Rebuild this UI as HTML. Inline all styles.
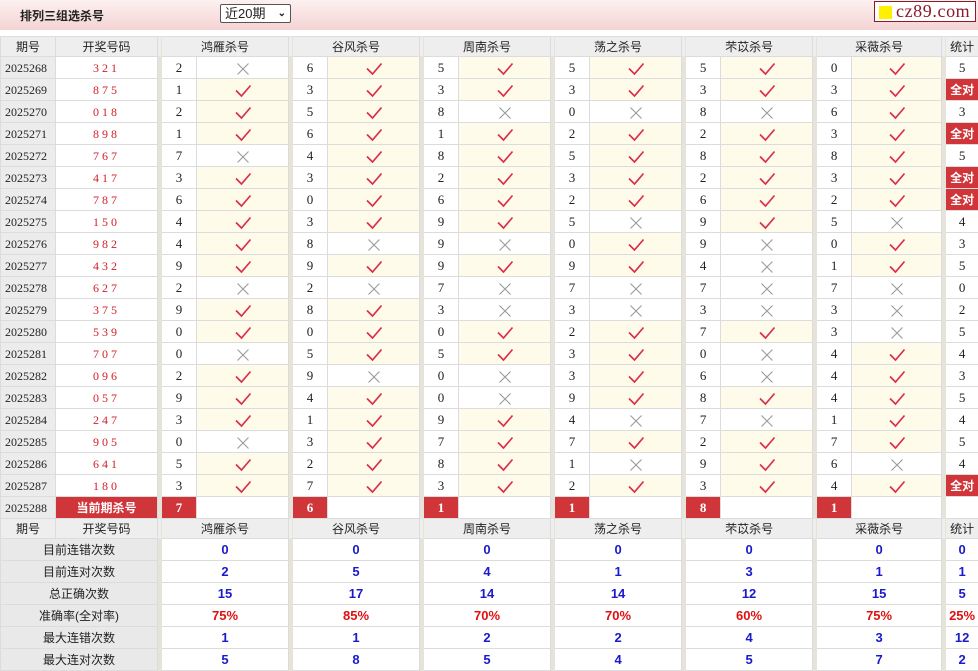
<!DOCTYPE html>
<html><head><meta charset="utf-8"><style>
*{margin:0;padding:0;box-sizing:border-box}
body{width:978px;height:669px;overflow:hidden;background:#fff;font-family:"Liberation Sans","Noto Sans CJK SC",sans-serif;font-size:12px;color:#222;position:relative}
.top{position:absolute;left:0;top:0;width:978px;height:30px;background:linear-gradient(#fdf1f1,#f4d3d3)}
.title{position:absolute;left:20px;top:7px;font-weight:bold;font-size:12px;color:#222}
.sel{position:absolute;left:220px;top:4px;width:71px;height:19px;border:1px solid #555;border-radius:2px;background:#fff;font-size:13px;padding-left:4px;line-height:17px}
.sel span{position:absolute;right:4px;top:0;font-size:10px;font-weight:bold}
.logo{position:absolute;left:874px;top:1px;width:102px;height:21px;border:1px solid #8b1a2a;background:#fff;font-family:"Liberation Serif",serif;font-size:18px;color:#8b1a2a;line-height:19px;padding-left:21px;letter-spacing:0.6px}
.logo i{position:absolute;left:4px;top:4px;width:13px;height:13px;background:#ffef00}
table{position:absolute;left:0;top:36px;width:978px;border-collapse:collapse;table-layout:fixed}
td{border:1px solid #dcdcdc;height:22px;text-align:center;padding:0;font-family:"Liberation Serif","Noto Sans CJK SC",serif;font-size:13px;line-height:20px;overflow:hidden;white-space:nowrap}
tr.h td{background:#eeeeee;font-family:"Liberation Sans","Noto Sans CJK SC",sans-serif;font-size:12px;height:20px;line-height:18px}
td.q{background:#ececec;text-align:left;padding-left:4px;font-size:12px}
td.k{color:#d2202a;letter-spacing:3px;font-size:12px}
td.s{background:#e6e3da;border-color:#e6e3da}
td.y{background:#fffbeb}
td.r{background:#d0353a;color:#fff;font-weight:bold}
td.a{background:#d0353a;color:#fff;font-weight:bold;font-family:"Liberation Sans","Noto Sans CJK SC",sans-serif;font-size:12px}
td.l{background:#e9e9e9;font-family:"Liberation Sans","Noto Sans CJK SC",sans-serif;font-size:12px}
td.b{color:#1a1acc;font-weight:bold;font-family:"Liberation Sans",sans-serif;font-size:13px}
td.p{color:#e01010;font-weight:bold;font-family:"Liberation Sans",sans-serif;font-size:13px}
svg{vertical-align:middle}
</style></head><body>
<svg width="0" height="0" style="position:absolute"><defs>
<symbol id="v" viewBox="0 0 18 14"><path d="M2 6.5 L7.5 12 L16.5 1.5" fill="none" stroke="#d9304a" stroke-width="1.7"/></symbol>
<symbol id="x" viewBox="0 0 14 14"><path d="M1.5 1.5 L12.5 12.5 M12.5 1.5 L1.5 12.5" fill="none" stroke="#9a9a9a" stroke-width="1.1"/></symbol>
</defs></svg>
<div class="top"><div class="title">排列三组选杀号</div><div class="sel">近20期<span>&#8964;</span></div><div class="logo"><i></i>cz89.com</div></div>
<table>
<colgroup><col style="width:55px"><col style="width:102px"><col style="width:4px">
<col style="width:35px"><col style="width:92px"><col style="width:4px">
<col style="width:35px"><col style="width:92px"><col style="width:4px">
<col style="width:35px"><col style="width:92px"><col style="width:4px">
<col style="width:35px"><col style="width:92px"><col style="width:4px">
<col style="width:35px"><col style="width:92px"><col style="width:4px">
<col style="width:35px"><col style="width:90px"><col style="width:4px">
<col style="width:33px"></colgroup>
<tr class="h"><td>期号</td><td>开奖号码</td><td class="s"></td><td colspan="2">鸿雁杀号</td><td class="s"></td><td colspan="2">谷风杀号</td><td class="s"></td><td colspan="2">周南杀号</td><td class="s"></td><td colspan="2">荡之杀号</td><td class="s"></td><td colspan="2">芣苡杀号</td><td class="s"></td><td colspan="2">采薇杀号</td><td class="s"></td><td>统计</td></tr>
<tr><td class="q">2025268</td><td class="k">321</td><td class="s"></td><td>2</td><td><svg width="14" height="14"><use href="#x"/></svg></td><td class="s"></td><td>6</td><td class="y"><svg width="18" height="14"><use href="#v"/></svg></td><td class="s"></td><td>5</td><td class="y"><svg width="18" height="14"><use href="#v"/></svg></td><td class="s"></td><td>5</td><td class="y"><svg width="18" height="14"><use href="#v"/></svg></td><td class="s"></td><td>5</td><td class="y"><svg width="18" height="14"><use href="#v"/></svg></td><td class="s"></td><td>0</td><td class="y"><svg width="18" height="14"><use href="#v"/></svg></td><td class="s"></td><td>5</td></tr>
<tr><td class="q">2025269</td><td class="k">875</td><td class="s"></td><td>1</td><td class="y"><svg width="18" height="14"><use href="#v"/></svg></td><td class="s"></td><td>3</td><td class="y"><svg width="18" height="14"><use href="#v"/></svg></td><td class="s"></td><td>3</td><td class="y"><svg width="18" height="14"><use href="#v"/></svg></td><td class="s"></td><td>3</td><td class="y"><svg width="18" height="14"><use href="#v"/></svg></td><td class="s"></td><td>3</td><td class="y"><svg width="18" height="14"><use href="#v"/></svg></td><td class="s"></td><td>3</td><td class="y"><svg width="18" height="14"><use href="#v"/></svg></td><td class="s"></td><td class="a">全对</td></tr>
<tr><td class="q">2025270</td><td class="k">018</td><td class="s"></td><td>2</td><td class="y"><svg width="18" height="14"><use href="#v"/></svg></td><td class="s"></td><td>5</td><td class="y"><svg width="18" height="14"><use href="#v"/></svg></td><td class="s"></td><td>8</td><td><svg width="14" height="14"><use href="#x"/></svg></td><td class="s"></td><td>0</td><td><svg width="14" height="14"><use href="#x"/></svg></td><td class="s"></td><td>8</td><td><svg width="14" height="14"><use href="#x"/></svg></td><td class="s"></td><td>6</td><td class="y"><svg width="18" height="14"><use href="#v"/></svg></td><td class="s"></td><td>3</td></tr>
<tr><td class="q">2025271</td><td class="k">898</td><td class="s"></td><td>1</td><td class="y"><svg width="18" height="14"><use href="#v"/></svg></td><td class="s"></td><td>6</td><td class="y"><svg width="18" height="14"><use href="#v"/></svg></td><td class="s"></td><td>1</td><td class="y"><svg width="18" height="14"><use href="#v"/></svg></td><td class="s"></td><td>2</td><td class="y"><svg width="18" height="14"><use href="#v"/></svg></td><td class="s"></td><td>2</td><td class="y"><svg width="18" height="14"><use href="#v"/></svg></td><td class="s"></td><td>3</td><td class="y"><svg width="18" height="14"><use href="#v"/></svg></td><td class="s"></td><td class="a">全对</td></tr>
<tr><td class="q">2025272</td><td class="k">767</td><td class="s"></td><td>7</td><td><svg width="14" height="14"><use href="#x"/></svg></td><td class="s"></td><td>4</td><td class="y"><svg width="18" height="14"><use href="#v"/></svg></td><td class="s"></td><td>8</td><td class="y"><svg width="18" height="14"><use href="#v"/></svg></td><td class="s"></td><td>5</td><td class="y"><svg width="18" height="14"><use href="#v"/></svg></td><td class="s"></td><td>8</td><td class="y"><svg width="18" height="14"><use href="#v"/></svg></td><td class="s"></td><td>8</td><td class="y"><svg width="18" height="14"><use href="#v"/></svg></td><td class="s"></td><td>5</td></tr>
<tr><td class="q">2025273</td><td class="k">417</td><td class="s"></td><td>3</td><td class="y"><svg width="18" height="14"><use href="#v"/></svg></td><td class="s"></td><td>3</td><td class="y"><svg width="18" height="14"><use href="#v"/></svg></td><td class="s"></td><td>2</td><td class="y"><svg width="18" height="14"><use href="#v"/></svg></td><td class="s"></td><td>3</td><td class="y"><svg width="18" height="14"><use href="#v"/></svg></td><td class="s"></td><td>2</td><td class="y"><svg width="18" height="14"><use href="#v"/></svg></td><td class="s"></td><td>3</td><td class="y"><svg width="18" height="14"><use href="#v"/></svg></td><td class="s"></td><td class="a">全对</td></tr>
<tr><td class="q">2025274</td><td class="k">787</td><td class="s"></td><td>6</td><td class="y"><svg width="18" height="14"><use href="#v"/></svg></td><td class="s"></td><td>0</td><td class="y"><svg width="18" height="14"><use href="#v"/></svg></td><td class="s"></td><td>6</td><td class="y"><svg width="18" height="14"><use href="#v"/></svg></td><td class="s"></td><td>2</td><td class="y"><svg width="18" height="14"><use href="#v"/></svg></td><td class="s"></td><td>6</td><td class="y"><svg width="18" height="14"><use href="#v"/></svg></td><td class="s"></td><td>2</td><td class="y"><svg width="18" height="14"><use href="#v"/></svg></td><td class="s"></td><td class="a">全对</td></tr>
<tr><td class="q">2025275</td><td class="k">150</td><td class="s"></td><td>4</td><td class="y"><svg width="18" height="14"><use href="#v"/></svg></td><td class="s"></td><td>3</td><td class="y"><svg width="18" height="14"><use href="#v"/></svg></td><td class="s"></td><td>9</td><td class="y"><svg width="18" height="14"><use href="#v"/></svg></td><td class="s"></td><td>5</td><td><svg width="14" height="14"><use href="#x"/></svg></td><td class="s"></td><td>9</td><td class="y"><svg width="18" height="14"><use href="#v"/></svg></td><td class="s"></td><td>5</td><td><svg width="14" height="14"><use href="#x"/></svg></td><td class="s"></td><td>4</td></tr>
<tr><td class="q">2025276</td><td class="k">982</td><td class="s"></td><td>4</td><td class="y"><svg width="18" height="14"><use href="#v"/></svg></td><td class="s"></td><td>8</td><td><svg width="14" height="14"><use href="#x"/></svg></td><td class="s"></td><td>9</td><td><svg width="14" height="14"><use href="#x"/></svg></td><td class="s"></td><td>0</td><td class="y"><svg width="18" height="14"><use href="#v"/></svg></td><td class="s"></td><td>9</td><td><svg width="14" height="14"><use href="#x"/></svg></td><td class="s"></td><td>0</td><td class="y"><svg width="18" height="14"><use href="#v"/></svg></td><td class="s"></td><td>3</td></tr>
<tr><td class="q">2025277</td><td class="k">432</td><td class="s"></td><td>9</td><td class="y"><svg width="18" height="14"><use href="#v"/></svg></td><td class="s"></td><td>9</td><td class="y"><svg width="18" height="14"><use href="#v"/></svg></td><td class="s"></td><td>9</td><td class="y"><svg width="18" height="14"><use href="#v"/></svg></td><td class="s"></td><td>9</td><td class="y"><svg width="18" height="14"><use href="#v"/></svg></td><td class="s"></td><td>4</td><td><svg width="14" height="14"><use href="#x"/></svg></td><td class="s"></td><td>1</td><td class="y"><svg width="18" height="14"><use href="#v"/></svg></td><td class="s"></td><td>5</td></tr>
<tr><td class="q">2025278</td><td class="k">627</td><td class="s"></td><td>2</td><td><svg width="14" height="14"><use href="#x"/></svg></td><td class="s"></td><td>2</td><td><svg width="14" height="14"><use href="#x"/></svg></td><td class="s"></td><td>7</td><td><svg width="14" height="14"><use href="#x"/></svg></td><td class="s"></td><td>7</td><td><svg width="14" height="14"><use href="#x"/></svg></td><td class="s"></td><td>7</td><td><svg width="14" height="14"><use href="#x"/></svg></td><td class="s"></td><td>7</td><td><svg width="14" height="14"><use href="#x"/></svg></td><td class="s"></td><td>0</td></tr>
<tr><td class="q">2025279</td><td class="k">375</td><td class="s"></td><td>9</td><td class="y"><svg width="18" height="14"><use href="#v"/></svg></td><td class="s"></td><td>8</td><td class="y"><svg width="18" height="14"><use href="#v"/></svg></td><td class="s"></td><td>3</td><td><svg width="14" height="14"><use href="#x"/></svg></td><td class="s"></td><td>3</td><td><svg width="14" height="14"><use href="#x"/></svg></td><td class="s"></td><td>3</td><td><svg width="14" height="14"><use href="#x"/></svg></td><td class="s"></td><td>3</td><td><svg width="14" height="14"><use href="#x"/></svg></td><td class="s"></td><td>2</td></tr>
<tr><td class="q">2025280</td><td class="k">539</td><td class="s"></td><td>0</td><td class="y"><svg width="18" height="14"><use href="#v"/></svg></td><td class="s"></td><td>0</td><td class="y"><svg width="18" height="14"><use href="#v"/></svg></td><td class="s"></td><td>0</td><td class="y"><svg width="18" height="14"><use href="#v"/></svg></td><td class="s"></td><td>2</td><td class="y"><svg width="18" height="14"><use href="#v"/></svg></td><td class="s"></td><td>7</td><td class="y"><svg width="18" height="14"><use href="#v"/></svg></td><td class="s"></td><td>3</td><td><svg width="14" height="14"><use href="#x"/></svg></td><td class="s"></td><td>5</td></tr>
<tr><td class="q">2025281</td><td class="k">707</td><td class="s"></td><td>0</td><td><svg width="14" height="14"><use href="#x"/></svg></td><td class="s"></td><td>5</td><td class="y"><svg width="18" height="14"><use href="#v"/></svg></td><td class="s"></td><td>5</td><td class="y"><svg width="18" height="14"><use href="#v"/></svg></td><td class="s"></td><td>3</td><td class="y"><svg width="18" height="14"><use href="#v"/></svg></td><td class="s"></td><td>0</td><td><svg width="14" height="14"><use href="#x"/></svg></td><td class="s"></td><td>4</td><td class="y"><svg width="18" height="14"><use href="#v"/></svg></td><td class="s"></td><td>4</td></tr>
<tr><td class="q">2025282</td><td class="k">096</td><td class="s"></td><td>2</td><td class="y"><svg width="18" height="14"><use href="#v"/></svg></td><td class="s"></td><td>9</td><td><svg width="14" height="14"><use href="#x"/></svg></td><td class="s"></td><td>0</td><td><svg width="14" height="14"><use href="#x"/></svg></td><td class="s"></td><td>3</td><td class="y"><svg width="18" height="14"><use href="#v"/></svg></td><td class="s"></td><td>6</td><td><svg width="14" height="14"><use href="#x"/></svg></td><td class="s"></td><td>4</td><td class="y"><svg width="18" height="14"><use href="#v"/></svg></td><td class="s"></td><td>3</td></tr>
<tr><td class="q">2025283</td><td class="k">057</td><td class="s"></td><td>9</td><td class="y"><svg width="18" height="14"><use href="#v"/></svg></td><td class="s"></td><td>4</td><td class="y"><svg width="18" height="14"><use href="#v"/></svg></td><td class="s"></td><td>0</td><td><svg width="14" height="14"><use href="#x"/></svg></td><td class="s"></td><td>9</td><td class="y"><svg width="18" height="14"><use href="#v"/></svg></td><td class="s"></td><td>8</td><td class="y"><svg width="18" height="14"><use href="#v"/></svg></td><td class="s"></td><td>4</td><td class="y"><svg width="18" height="14"><use href="#v"/></svg></td><td class="s"></td><td>5</td></tr>
<tr><td class="q">2025284</td><td class="k">247</td><td class="s"></td><td>3</td><td class="y"><svg width="18" height="14"><use href="#v"/></svg></td><td class="s"></td><td>1</td><td class="y"><svg width="18" height="14"><use href="#v"/></svg></td><td class="s"></td><td>9</td><td class="y"><svg width="18" height="14"><use href="#v"/></svg></td><td class="s"></td><td>4</td><td><svg width="14" height="14"><use href="#x"/></svg></td><td class="s"></td><td>7</td><td><svg width="14" height="14"><use href="#x"/></svg></td><td class="s"></td><td>1</td><td class="y"><svg width="18" height="14"><use href="#v"/></svg></td><td class="s"></td><td>4</td></tr>
<tr><td class="q">2025285</td><td class="k">905</td><td class="s"></td><td>0</td><td><svg width="14" height="14"><use href="#x"/></svg></td><td class="s"></td><td>3</td><td class="y"><svg width="18" height="14"><use href="#v"/></svg></td><td class="s"></td><td>7</td><td class="y"><svg width="18" height="14"><use href="#v"/></svg></td><td class="s"></td><td>7</td><td class="y"><svg width="18" height="14"><use href="#v"/></svg></td><td class="s"></td><td>2</td><td class="y"><svg width="18" height="14"><use href="#v"/></svg></td><td class="s"></td><td>7</td><td class="y"><svg width="18" height="14"><use href="#v"/></svg></td><td class="s"></td><td>5</td></tr>
<tr><td class="q">2025286</td><td class="k">641</td><td class="s"></td><td>5</td><td class="y"><svg width="18" height="14"><use href="#v"/></svg></td><td class="s"></td><td>2</td><td class="y"><svg width="18" height="14"><use href="#v"/></svg></td><td class="s"></td><td>8</td><td class="y"><svg width="18" height="14"><use href="#v"/></svg></td><td class="s"></td><td>1</td><td><svg width="14" height="14"><use href="#x"/></svg></td><td class="s"></td><td>9</td><td class="y"><svg width="18" height="14"><use href="#v"/></svg></td><td class="s"></td><td>6</td><td><svg width="14" height="14"><use href="#x"/></svg></td><td class="s"></td><td>4</td></tr>
<tr><td class="q">2025287</td><td class="k">180</td><td class="s"></td><td>3</td><td class="y"><svg width="18" height="14"><use href="#v"/></svg></td><td class="s"></td><td>7</td><td class="y"><svg width="18" height="14"><use href="#v"/></svg></td><td class="s"></td><td>3</td><td class="y"><svg width="18" height="14"><use href="#v"/></svg></td><td class="s"></td><td>2</td><td class="y"><svg width="18" height="14"><use href="#v"/></svg></td><td class="s"></td><td>3</td><td class="y"><svg width="18" height="14"><use href="#v"/></svg></td><td class="s"></td><td>4</td><td class="y"><svg width="18" height="14"><use href="#v"/></svg></td><td class="s"></td><td class="a">全对</td></tr>
<tr><td class="q">2025288</td><td class="a">当前期杀号</td><td class="s"></td><td class="r">7</td><td></td><td class="s"></td><td class="r">6</td><td></td><td class="s"></td><td class="r">1</td><td></td><td class="s"></td><td class="r">1</td><td></td><td class="s"></td><td class="r">8</td><td></td><td class="s"></td><td class="r">1</td><td></td><td class="s"></td><td></td></tr>
<tr class="h"><td>期号</td><td>开奖号码</td><td class="s"></td><td colspan="2">鸿雁杀号</td><td class="s"></td><td colspan="2">谷风杀号</td><td class="s"></td><td colspan="2">周南杀号</td><td class="s"></td><td colspan="2">荡之杀号</td><td class="s"></td><td colspan="2">芣苡杀号</td><td class="s"></td><td colspan="2">采薇杀号</td><td class="s"></td><td>统计</td></tr>
<tr><td class="l" colspan="2">目前连错次数</td><td class="s"></td><td class="b" colspan="2">0</td><td class="s"></td><td class="b" colspan="2">0</td><td class="s"></td><td class="b" colspan="2">0</td><td class="s"></td><td class="b" colspan="2">0</td><td class="s"></td><td class="b" colspan="2">0</td><td class="s"></td><td class="b" colspan="2">0</td><td class="s"></td><td class="b">0</td></tr>
<tr><td class="l" colspan="2">目前连对次数</td><td class="s"></td><td class="b" colspan="2">2</td><td class="s"></td><td class="b" colspan="2">5</td><td class="s"></td><td class="b" colspan="2">4</td><td class="s"></td><td class="b" colspan="2">1</td><td class="s"></td><td class="b" colspan="2">3</td><td class="s"></td><td class="b" colspan="2">1</td><td class="s"></td><td class="b">1</td></tr>
<tr><td class="l" colspan="2">总正确次数</td><td class="s"></td><td class="b" colspan="2">15</td><td class="s"></td><td class="b" colspan="2">17</td><td class="s"></td><td class="b" colspan="2">14</td><td class="s"></td><td class="b" colspan="2">14</td><td class="s"></td><td class="b" colspan="2">12</td><td class="s"></td><td class="b" colspan="2">15</td><td class="s"></td><td class="b">5</td></tr>
<tr><td class="l" colspan="2">准确率(全对率)</td><td class="s"></td><td class="p" colspan="2">75%</td><td class="s"></td><td class="p" colspan="2">85%</td><td class="s"></td><td class="p" colspan="2">70%</td><td class="s"></td><td class="p" colspan="2">70%</td><td class="s"></td><td class="p" colspan="2">60%</td><td class="s"></td><td class="p" colspan="2">75%</td><td class="s"></td><td class="p">25%</td></tr>
<tr><td class="l" colspan="2">最大连错次数</td><td class="s"></td><td class="b" colspan="2">1</td><td class="s"></td><td class="b" colspan="2">1</td><td class="s"></td><td class="b" colspan="2">2</td><td class="s"></td><td class="b" colspan="2">2</td><td class="s"></td><td class="b" colspan="2">4</td><td class="s"></td><td class="b" colspan="2">3</td><td class="s"></td><td class="b">12</td></tr>
<tr><td class="l" colspan="2">最大连对次数</td><td class="s"></td><td class="b" colspan="2">5</td><td class="s"></td><td class="b" colspan="2">8</td><td class="s"></td><td class="b" colspan="2">5</td><td class="s"></td><td class="b" colspan="2">4</td><td class="s"></td><td class="b" colspan="2">5</td><td class="s"></td><td class="b" colspan="2">7</td><td class="s"></td><td class="b">2</td></tr>
</table>
</body></html>
